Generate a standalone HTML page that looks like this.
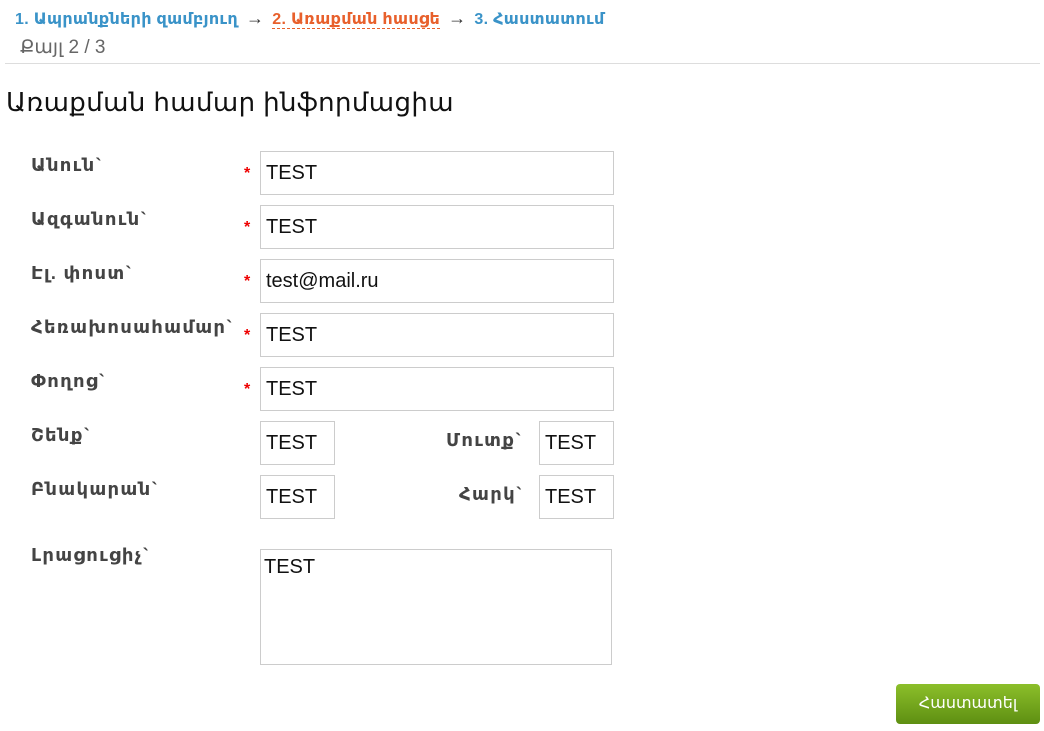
<!DOCTYPE html>
<html><head><meta charset="utf-8"><style>
body{margin:0;width:1044px;height:731px;background:#fff;font-family:"Liberation Sans","DejaVu Sans",sans-serif;position:relative;overflow:hidden}
.a{position:absolute;white-space:nowrap}
.steps{left:15px;top:8px;font-size:16px;font-weight:bold;color:#3a93c8;letter-spacing:0.3px}
.steps .cur{color:#e8602c;border-bottom:1px dashed #e8602c}
.steps .ar{color:#333;font-weight:normal;margin:0 8px;font-size:18px}
.lbl{font-size:18px;font-weight:bold;color:#444;letter-spacing:1.3px}
.in{position:absolute;border:1px solid #ccc;box-sizing:border-box;font-size:20px;color:#111;padding:0 5px;line-height:42px;height:44px}
.st{position:absolute;color:#e00;font-size:16px;font-weight:bold;left:244px}
</style></head><body>
<div class="a steps">1. Ապրանքների զամբյուղ<span class="ar">→</span><span class="cur">2. Առաքման հասցե</span><span class="ar">→</span>3. Հաստատում</div>
<div class="a" style="left:20px;top:36px;font-size:19px;color:#666">Քայլ 2 / 3</div>
<div class="a" style="left:5px;top:63px;width:1035px;height:1px;background:#ddd"></div>
<div class="a" style="left:6px;top:87px;font-size:26px;color:#111;letter-spacing:0.4px">Առաքման համար ինֆորմացիա</div>

<div class="a lbl" style="left:31px;top:155px">Անուն`</div>
<div class="st" style="top:165px">*</div><div class="in" style="left:260px;top:151px;width:354px">TEST</div>
<div class="a lbl" style="left:31px;top:209px">Ազգանուն`</div>
<div class="st" style="top:219px">*</div><div class="in" style="left:260px;top:205px;width:354px">TEST</div>
<div class="a lbl" style="left:31px;top:263px">Էլ. փոստ`</div>
<div class="st" style="top:273px">*</div><div class="in" style="left:260px;top:259px;width:354px">test@mail.ru</div>
<div class="a lbl" style="left:31px;top:317px">Հեռախոսահամար`</div>
<div class="st" style="top:327px">*</div><div class="in" style="left:260px;top:313px;width:354px">TEST</div>
<div class="a lbl" style="left:31px;top:371px">Փողոց`</div>
<div class="st" style="top:381px">*</div><div class="in" style="left:260px;top:367px;width:354px">TEST</div>
<div class="a lbl" style="left:31px;top:425px">Շենք`</div>
<div class="in" style="left:260px;top:421px;width:75px">TEST</div>
<div class="a lbl" style="left:446px;top:430px">Մուտք`</div>
<div class="in" style="left:539px;top:421px;width:75px">TEST</div>
<div class="a lbl" style="left:31px;top:479px">Բնակարան`</div>
<div class="in" style="left:260px;top:475px;width:75px">TEST</div>
<div class="a lbl" style="left:459px;top:484px">Հարկ`</div>
<div class="in" style="left:539px;top:475px;width:75px">TEST</div>
<div class="a lbl" style="left:31px;top:545px">Լրացուցիչ`</div>
<div class="in" style="left:260px;top:549px;width:352px;height:116px;line-height:34px;padding:0 3px">TEST</div>

<div class="a" style="left:896px;top:684px;width:144px;height:40px;border-radius:4px;background:linear-gradient(#8cbf2a,#5e8f12);color:#fff;font-size:16px;text-align:center;line-height:40px">Հաստատել</div>
</body></html>
